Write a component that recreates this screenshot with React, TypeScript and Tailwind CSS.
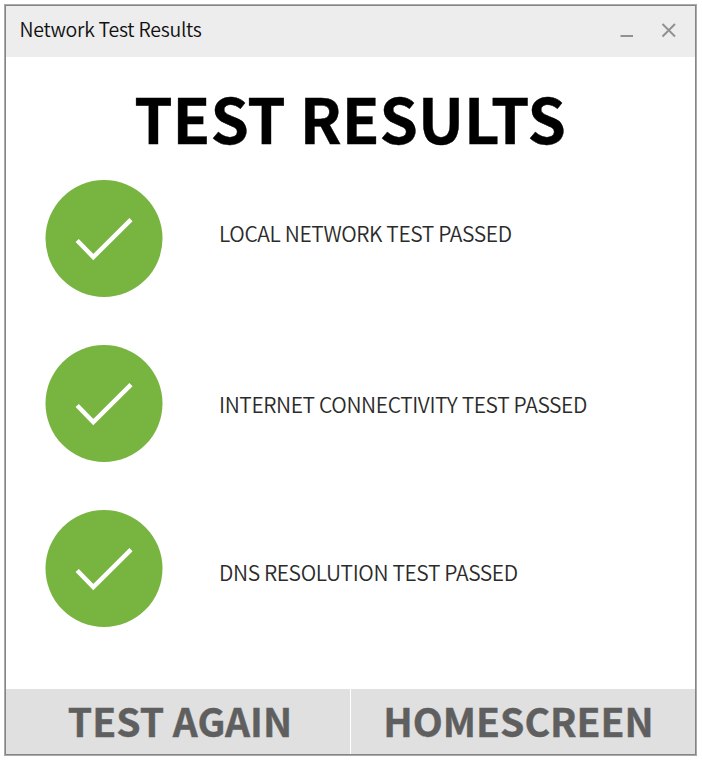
const rows = [
  { label: 'LOCAL NETWORK TEST PASSED', pad: 'pb-[9px]' },
  { label: 'INTERNET CONNECTIVITY TEST PASSED', pad: 'pt-[3px]' },
  { label: 'DNS RESOLUTION TEST PASSED', pad: 'pt-[9px]' },
];

function Check() {
  return (
    <svg className="h-[117px] w-[118px] shrink-0" viewBox="0 0 118 117" fill="none">
      <circle cx="59" cy="58.5" r="58.5" fill="#78b440" />
      <path d="M32.2 60.5 48.3 77 86 39.7" stroke="#fff" strokeWidth="4.5" />
    </svg>
  );
}

export default function App() {
  return (
    <div className="h-[760px] w-[702px] bg-white pl-1 pt-1 font-['Noto_Sans_CJK_SC',sans-serif]">
      <div className="flex h-[752px] w-[693px] flex-col border border-[#aaa] bg-white">
        <div className="flex grow flex-col border border-[#858585]">
          <header className="flex h-[51px] shrink-0 items-center bg-[#ededed] pl-[13.5px] pr-[18px]">
            <span className="grow pb-[5px] text-[19.5px] font-[350] tracking-[-0.25px] text-[#111]">Network Test Results</span>
            <svg className="mb-[4px] h-[16px] w-[58px]" viewBox="0 0 58 16" fill="none" stroke="#919191" strokeWidth="2">
              <path d="M1.5 14h12.5M43.5 2l12.5 12.5M56 2 43.5 14.5" />
            </svg>
          </header>
          <h1 className="mt-[20px] h-[103px] pr-[1px] text-center text-[61.5px] font-bold leading-[82px] text-black [-webkit-text-stroke:0.4px_black]">TEST RESULTS</h1>
          <main className="flex grow flex-col gap-[48px] pl-[39px]">
            {rows.map((r) => (
              <div key={r.label} className="flex h-[117px] items-center gap-[56px]">
                <Check />
                <span className={`text-[21px] font-[350] tracking-[-0.39px] text-[#2b2b2b] ${r.pad}`}>{r.label}</span>
              </div>
            ))}
          </main>
          <footer className="flex h-[65px] shrink-0 gap-px bg-white text-[39px] font-bold leading-[62px] text-[#5f5f5f] [-webkit-text-stroke:0.4px_#5f5f5f]">
            <button className="w-[344px] bg-[#e0e0e0] pb-[3px] pl-[4px]">TEST AGAIN</button>
            <button className="w-[344px] bg-[#e0e0e0] pb-[3px] pr-[9px]">HOMESCREEN</button>
          </footer>
        </div>
      </div>
    </div>
  );
}
